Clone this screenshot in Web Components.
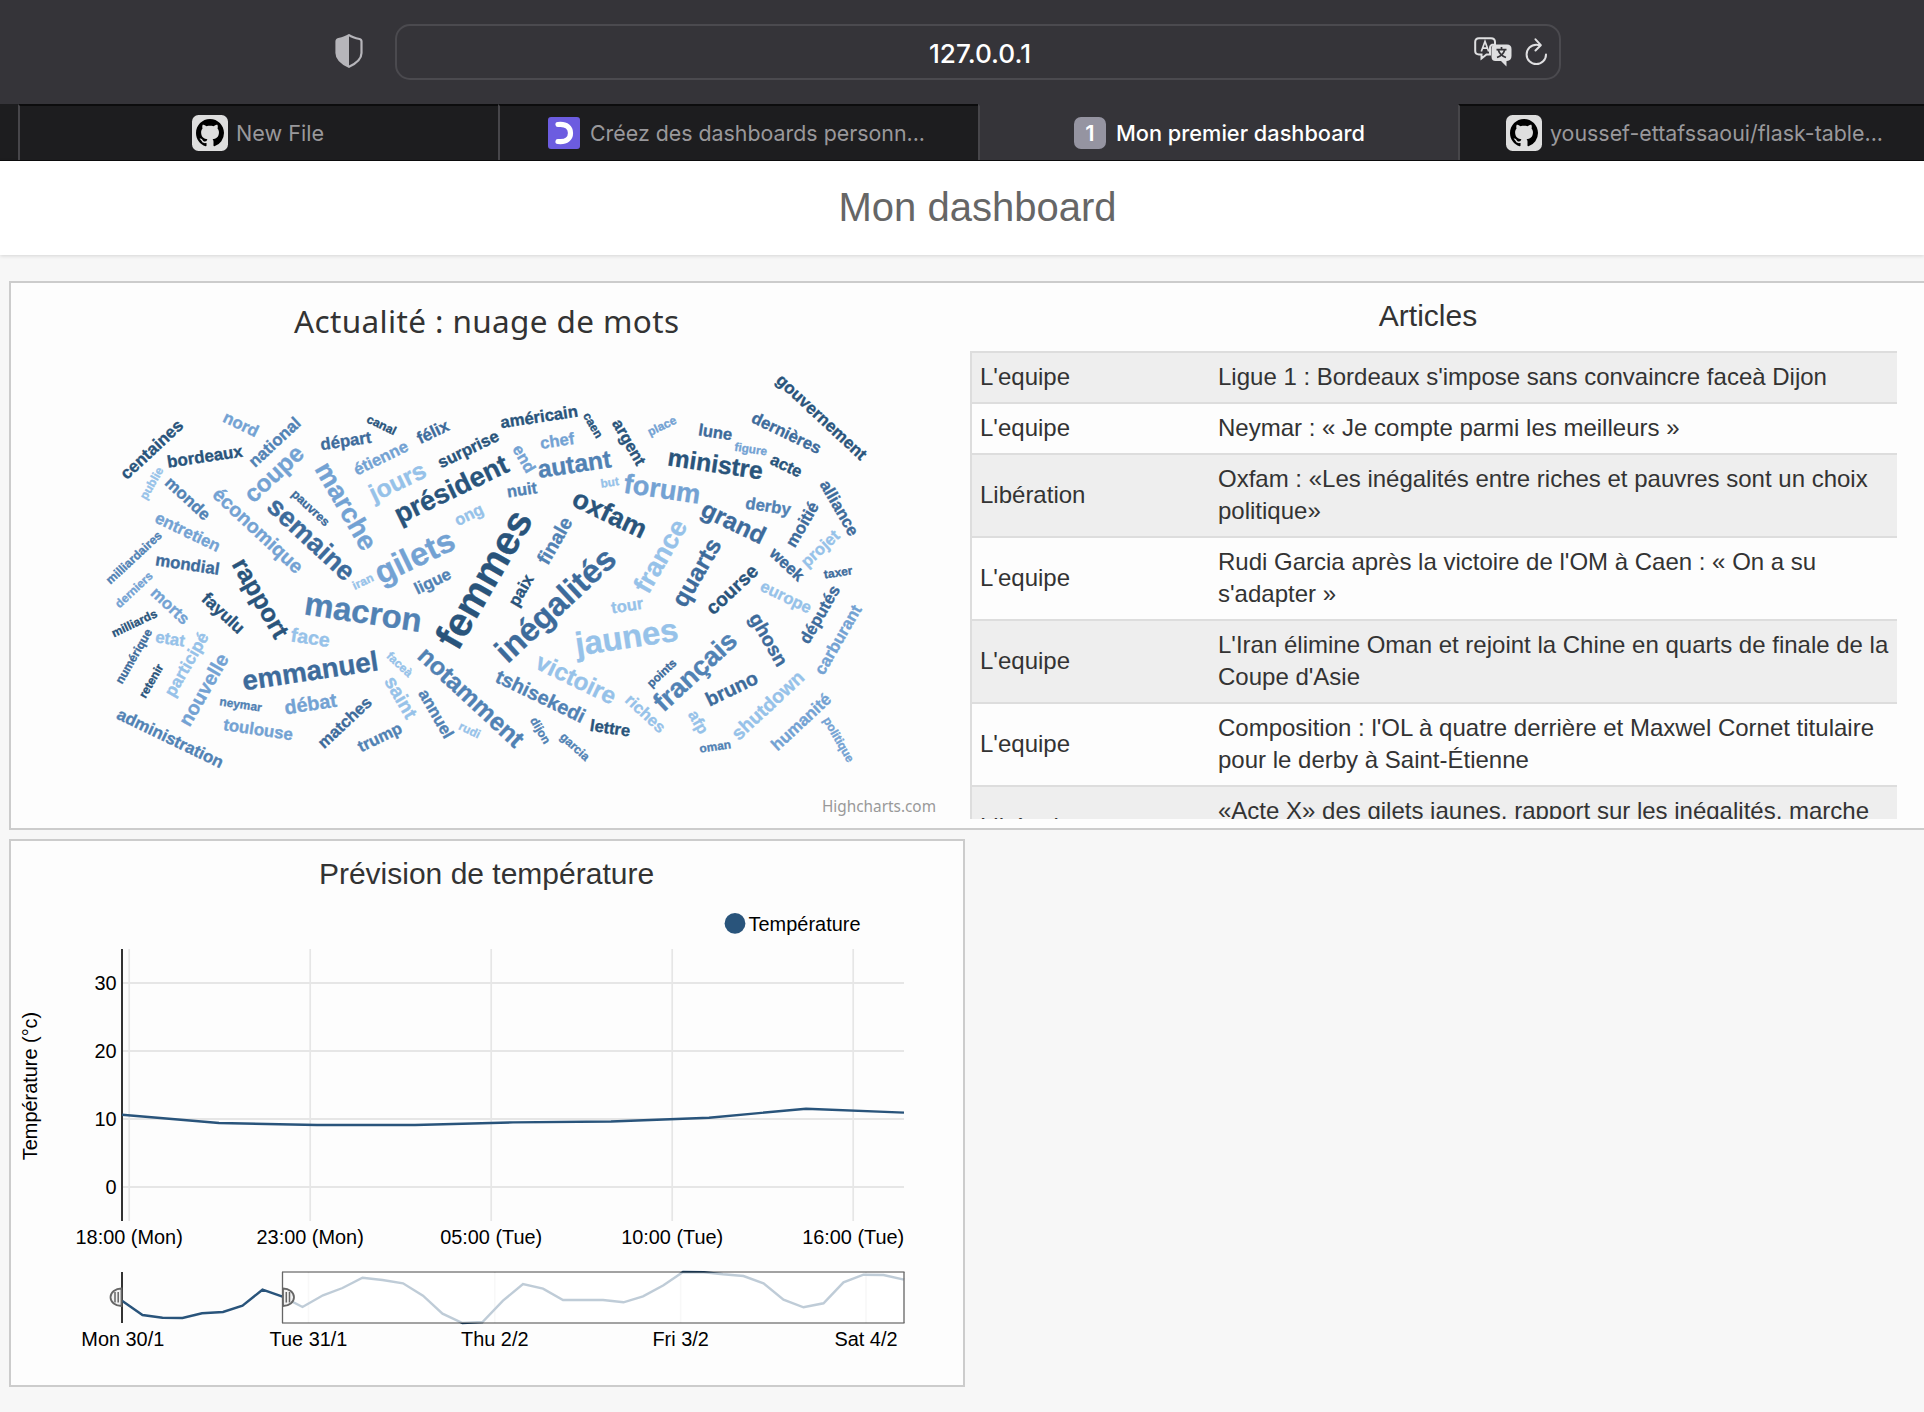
<!DOCTYPE html>
<html lang="fr">
<head>
<meta charset="utf-8">
<title>Mon premier dashboard</title>
<style>
html,body{margin:0;height:100%;overflow:hidden;background:#f7f7f7;font-family:"Liberation Sans",Arial,sans-serif;color:#333}
</style>
</head>
<body>
<browser-toolbar address="127.0.0.1"></browser-toolbar>
<tab-strip>
  <browser-tab icon="github" fit="88" shift="3">New File</browser-tab>
  <browser-tab icon="course" fit="335" shift="5">Créez des dashboards personn...</browser-tab>
  <browser-tab icon="badge" active fit="249" shift="0">Mon premier dashboard</browser-tab>
  <browser-tab icon="github" fit="333" shift="9">youssef-ettafssaoui/flask-table...</browser-tab>
</tab-strip>
<page-header>Mon dashboard</page-header>
<dashboard-grid>
  <dashboard-panel wide>
    <word-cloud></word-cloud>
    <article-list heading="Articles"></article-list>
  </dashboard-panel>
  <dashboard-panel>
    <temperature-chart></temperature-chart>
  </dashboard-panel>
</dashboard-grid>
<script>
class Base extends HTMLElement{
  connectedCallback(){
    if(this.shadowRoot) return;
    this.attachShadow({mode:'open'}).innerHTML=this.render();
  }
}

customElements.define('browser-toolbar',class extends Base{
  render(){return `<style>
:host{display:flex;box-sizing:border-box;height:104px;padding:24px 363px 24px 335px;background:#353439;align-items:center;gap:32px;font-family:Inter,sans-serif}
.shield{width:28px;height:34px;flex:none;margin-top:-2px}
.bar{flex:1;box-sizing:border-box;height:56px;border:2px solid #4b4a4f;border-radius:15px;display:flex;align-items:center;padding:0 11px 0 89px}
.addr{flex:1}
.addr svg{display:block;margin:auto;overflow:visible}
.tr{width:38px;height:30px;margin-right:13px}.re{width:23px;height:28px}
</style>
<svg class="shield" viewBox="0 0 28 34"><path d="M14 1.2 C10.5 3.6 6.500 4.400 3.500 5 Q1.500 5.500 1.500 7.500 V19 C1.500 25.500 7 29.500 14 32.800 C21 29.500 26.500 25.500 26.500 19 V7.500 Q26.500 5.500 24.500 5 C21.500 4.400 17.500 3.600 14 1.200Z" fill="none" stroke="#b6b5ba" stroke-width="2.200"/><path d="M14 1.500 C10.500 3.600 6.500 4.400 3.500 5 Q1.500 5.500 1.500 7.500 V19 C1.500 25.500 7 29.500 14 32.500Z" fill="#b6b5ba"/></svg>
<div class="bar"><div class="addr"><svg width="120" height="40"><text x="60" y="30.500" text-anchor="middle" textLength="102" lengthAdjust="spacingAndGlyphs" font-size="25.500" font-weight="500" fill="#fff">${this.getAttribute('address')}</text></svg></div>
<svg class="tr" viewBox="0 0 38 30"><path d="M5 1.200 H17 Q21 1.200 21 5 V7.500 H20 Q16 7.500 16 11 V17.500 H12.500 L7.500 21.500 V17.500 H5 Q1.200 17.500 1.200 14 V5 Q1.200 1.200 5 1.200Z" fill="none" stroke="#dfdfe1" stroke-width="2"/><path d="M7.300 14.500 L11 4.500 L14.700 14.500 M8.500 11.200 H13.500" fill="none" stroke="#dfdfe1" stroke-width="1.700"/><path d="M21.500 7.500 H33 Q37.500 7.500 37.500 12 V19 Q37.500 23.500 33 24 H32.500 V29.500 L27 24 H21.500 Q17.500 24 17.500 19.500 V12 Q17.500 7.500 21.500 7.500Z" fill="#dfdfe1"/><path d="M27.500 10 V12.500 M22.500 12.700 H32.500 M24.300 13 Q26 18.500 32 20.500 M30.700 13 Q29 18.500 23 20.500" fill="none" stroke="#353439" stroke-width="1.700"/></svg>
<svg class="re" viewBox="0 0 23 28"><path d="M15 7.200 Q13 6.700 11.300 6.700 A9.700 9.700 0 1 0 21 16.400" fill="none" stroke="#dfdfe1" stroke-width="2" stroke-linecap="round"/><path d="M10.500 1.300 L15.800 7.200 L10.500 12.500" fill="none" stroke="#dfdfe1" stroke-width="2" stroke-linecap="round" stroke-linejoin="round"/></svg></div>`}
});

customElements.define('tab-strip',class extends Base{
  render(){return `<style>:host{display:flex;box-sizing:border-box;height:57px;padding-left:18px;background:#1d1d1f;border-bottom:1px solid #0c0c0d;overflow:hidden}</style><slot></slot>`}
});

const TAB_ICONS={
  github:`<svg width="36" height="36" viewBox="0 0 36 36"><rect width="36" height="36" rx="6.500" fill="#dedede"/><path transform="translate(4 4) scale(1.75)" d="M8 0C3.580 0 0 3.580 0 8c0 3.540 2.290 6.530 5.470 7.590.4.070.55-.17.55-.38 0-.19-.01-.82-.01-1.490-2.010.37-2.530-.49-2.690-.94-.09-.23-.48-.94-.82-1.130-.28-.15-.68-.52-.01-.53.63-.01 1.080.58 1.230.82.72 1.210 1.870.87 2.330.66.07-.52.28-.87.51-1.070-1.780-.2-3.640-.89-3.640-3.950 0-.87.31-1.590.82-2.150-.08-.2-.36-1.020.08-2.120 0 0 .67-.21 2.200.82.640-.18 1.320-.27 2-.27.68 0 1.360.09 2 .27 1.530-1.040 2.200-.82 2.200-.82.44 1.100.16 1.920.08 2.120.51.56.82 1.270.82 2.150 0 3.070-1.870 3.750-3.650 3.950.29.25.54.73.54 1.480 0 1.070-.01 1.930-.01 2.200 0 .21.15.46.55.38A8.013 8.013 0 0016 8c0-4.420-3.580-8-8-8z"/></svg>`,
  course:`<svg width="32" height="32" viewBox="0 0 32 32"><rect width="32" height="32" rx="3" fill="#6c5ce0"/><path d="M10 7.500 C19 6.500 22.500 11 22.500 16 S19 25.500 10 24.500" fill="none" stroke="#fff" stroke-width="5.200" stroke-linecap="round"/></svg>`,
  badge:`<svg width="32" height="32" viewBox="0 0 32 32"><rect width="32" height="32" rx="7" fill="#9594a1"/><text x="16" y="23.500" text-anchor="middle" font-size="22" font-weight="600" fill="#fff">1</text></svg>`
};
customElements.define('browser-tab',class extends Base{
  render(){
    const w=+this.getAttribute('fit'),on=this.hasAttribute('active'),k=this.getAttribute('icon');
    return `<style>
:host{display:flex;flex:0 0 480px;box-sizing:border-box;height:56px;align-items:center;justify-content:center;gap:${k==='github'?8:10}px;padding-right:${this.getAttribute('shift')}px;border-left:2px solid #47464a;border-top:2px solid ${on?'#353439':'#0c0c0d'};background:${on?'#353439':'#1d1d1f'};font-family:Inter,sans-serif}
svg{display:block;flex:none;overflow:visible}
</style>${TAB_ICONS[k]}<svg width="${w}" height="36"><text x="0" y="26" textLength="${w}" lengthAdjust="spacingAndGlyphs" font-size="22" font-weight="${on?500:400}" fill="${on?'#fff':'#99989b'}">${this.textContent}</text></svg>`}
});

customElements.define('page-header',class extends Base{
  render(){return `<style>:host{display:flex;box-sizing:border-box;height:94px;padding:0 0 2px 31px;justify-content:center;align-items:center;background:#fff;color:#666;font:40px "Liberation Sans",Arial,sans-serif;box-shadow:0 1px 4px rgba(0,0,0,.14)}</style><slot></slot>`}
});

customElements.define('dashboard-grid',class extends Base{
  render(){return `<style>:host{display:flex;flex-direction:column;align-items:flex-start;gap:9px;padding:26px 0 0 9px}</style><slot></slot>`}
});

customElements.define('dashboard-panel',class extends Base{
  render(){const w=this.hasAttribute('wide');return `<style>:host{display:flex;box-sizing:border-box;width:${w?1930:956}px;height:${w?549:548}px;border:2px solid #ccc;background:#fdfdfd;overflow:hidden}</style><slot></slot>`}
});

/* Word, centre x, centre y of the lowercase band, rotation index, size, shade index */
const ANGLES=[-60,-42.86,-25.71,-8.57,8.57,25.71,42.86,60];
const SHADES=['#29547b','#3d6b9b','#5182b4','#73a2d3','#96c2e9'];
const WORDS=[
['femmes',486.5,580.5,0,39.8,0],['macron',363,614.5,4,32.2,2],['gilets',415.5,558.5,2,32,3],['jaunes',627,639.5,3,32.200,4],['inégalités',557,606.500,1,32.3,1],
['président',452,491,2,27,0],['semaine',310,540.3,6,26.8,1],['marche',344.500,507,7,26.800,3],['forum',662,491,4,26.800,3],['oxfam',609,515.5,5,26.4,0],['emmanuel',310.5,673,3,27.300,1],['français',696.3,672.7,1,26.5,2],['france',662,557,0,26.3,4],
['rapport',259,599,7,24.8,0],['notamment',469.800,698.3,6,24.6,2],['coupe',275,475,1,23.9,3],['jours',398.3,483.3,2,24.2,4],['autant',574.500,466,3,24.3,2],['ministre',715.2,465.8,4,24.3,0],['grand',732.8,524,5,24.2,1],['quarts',698,573.2,0,24,1],['victoire',575.5,680.7,5,23.8,4],
['économique',257,531.5,6,19.3,3],['nouvelle',205,690.5,0,19.4,3],['face',310.2,639,4,19.3,4],['débat',310.7,705.3,3,19.4,3],['saint',399.5,698,7,19.2,4],['tshisekedi',540,697.7,5,19.5,2],['finale',556,541.4,0,19.2,2],['course',733,590.5,1,19,0],['ghosn',767.4,640.3,7,19,1],['bruno',732.3,690,2,19.3,1],['shutdown',768.700,706.3,1,19.1,4],
['fayulu',222.4,614,6,17.2,0],['centaines',152.5,450.3,1,16.8,0],['monde',187,499.3,6,16.5,2],['bordeaux',205,457.7,3,16.7,0],['nord',240.5,425.4,5,16.500,3],['national',275.4,443,1,16.5,2],['départ',346,442,3,16.500,1],['entretien',187.3,533,5,16.400,3],['mondial',187.3,565.7,4,16.600,1],['morts',169.3,606.7,6,16.300,3],['etat',170,640,4,16.400,4],['participé',187.6,665,0,16.800,4],['toulouse',258,730.7,4,16.600,3],['administration',169.700,739.3,5,16.600,2],['matches',345.5,723.3,1,16.300,1],['trump',380.3,738.3,2,16.300,2],['annuel',435,714.3,7,16.400,2],['lettre',610,729.3,4,16.300,0],['ligue',433,582.3,2,16.400,2],['paix',522,591,0,16.600,0],['tour',627.3,606.7,3,16.300,4],
['félix',433.3,433,2,16.500,1],['étienne',381.3,459,2,16.400,3],['surprise',468.7,450.3,2,16.400,0],['américain',539.2,418,3,16.500,0],['chef',557.3,442,3,16.400,3],['end',523,459.3,7,16.200,3],['nuit',522,491,3,16.300,2],['ong',469.3,515.7,2,16.200,4],['argent',628,442.8,7,16.300,0],['lune',715.2,433.500,4,16.300,1],['dernières',786,434,5,16.400,1],['gouvernement',820.8,418,6,16.700,0],['acte',785.7,466.7,5,16.300,0],['derby',768,507.4,4,16.500,2],['moitié',803.3,525,0,16.500,1],['alliance',838.3,508.5,7,16.400,1],['projet',821,549.3,1,16.300,4],['week',786.2,565.3,6,16.200,1],['europe',785.5,598,5,16.200,4],['députés',820.7,615,0,16.500,1],['carburant',839,640.3,0,16.500,3],['riches',644.7,714.4,6,16.100,4],['afp',697.3,722.7,7,16,4],['humanité',802,722.7,1,16.600,3],
['publie',152.3,483.7,0,11.800,4],['pauvres',310,508.5,6,12,1],['milliardaires',134.500,558.3,1,11.900,2],['iran',363.3,582.3,2,11.700,4],['derniers',134.5,590.3,1,11.600,3],['milliards',134.700,624,2,11.700,0],['numérique',134.5,656.7,0,11.800,1],['retenir',151.9,681.4,0,11.700,0],['neymar',240.5,705.3,4,11.800,2],['faceà',399,665,6,11.700,4],['rudi',469.3,731,5,11.700,4],['dijon',539.7,731,7,11.700,2],['garcia',574.3,747.3,6,11.800,2],['canal',381.3,425.7,5,12,0],['caen',592.3,425.7,7,11.800,0],['but',609.8,483.3,3,11.500,4],['place',662.3,426.7,2,11.700,3],['figure',750.7,450,4,11.600,3],['taxer',838.3,573.3,3,11.800,1],['points',662.3,673.7,1,11.600,1],['oman',715.3,747.3,3,11.700,2],['politique',838,740,7,11.800,3]];
customElements.define('word-cloud',class extends Base{
  render(){return `<style>:host{display:block;flex:none;width:954px;height:545px}svg{display:block}.w{font:bold 16px "Liberation Sans",Arial,sans-serif;stroke-width:.35px}.t{font-family:"Noto Sans","DejaVu Sans",sans-serif}</style>
<svg width="954" height="545" viewBox="11 283 954 545">
<text class="t" x="294" y="333" font-size="31.500" textLength="385" fill="#333">Actualité : nuage de mots</text>
${WORDS.map(([t,x,y,a,s,c])=>`<text class="w" text-anchor="middle" y="${(s*.27).toFixed(2)}" transform="translate(${x} ${y}) rotate(${ANGLES[a]})" style="font-size:${(s*1.015).toFixed(2)}px" fill="${SHADES[c]}" stroke="${SHADES[c]}">${t}</text>`).join('')}
<text class="t" x="822" y="811.500" font-size="15.500" textLength="114" lengthAdjust="spacingAndGlyphs" fill="#999">Highcharts.com</text>
</svg>`}
});

const ARTICLES=[
["L'equipe","Ligue 1 : Bordeaux s'impose sans convaincre faceà Dijon"],
["L'equipe","Neymar : « Je compte parmi les meilleurs »"],
["Libération","Oxfam : «Les inégalités entre riches et pauvres sont un choix politique»"],
["L'equipe","Rudi Garcia après la victoire de l'OM à Caen : « On a su s'adapter »"],
["L'equipe","L'Iran élimine Oman et rejoint la Chine en quarts de finale de la Coupe d'Asie"],
["L'equipe","Composition : l'OL à quatre derrière et Maxwel Cornet titulaire pour le derby à Saint-Étienne"],
["Libération","«Acte X» des gilets jaunes, rapport sur les inégalités, marche"]];
customElements.define('article-list',class extends Base{
  render(){return `<style>
:host{display:flex;flex-direction:column;flex:none;width:927px;margin-left:5px;font:24px/32px "Liberation Sans",Arial,sans-serif;color:#333}
h2{margin:0;height:68px;box-sizing:border-box;padding-top:17px;padding-right:11px;font-weight:400;font-size:30px;line-height:32px;text-align:center}
.list{height:468px;overflow:hidden;border-left:2px solid #ddd;box-sizing:border-box}
.row{display:flex;align-items:center;box-sizing:border-box;border-top:2px solid #ddd;padding:8px 0 9px 8px}
.row:nth-child(odd){background:#eee}
.row:last-child{height:83px}
.src{flex:0 0 238px}.ttl{flex:1;padding-right:6px}
.row:last-child .ttl{align-self:flex-start}
</style><h2>${this.getAttribute('heading')}</h2><div class="list">${ARTICLES.map(([s,t])=>`<div class="row"><div class="src">${s}</div><div class="ttl">${t}</div></div>`).join('')}</div>`}
});

const NAV='122,1300.7 142.5,1315 162.5,1317.7 182.5,1318 202,1313.3 223,1312 242.5,1305.7 262.5,1289.7 282.5,1296.7 302.5,1307 323,1295.3 342.5,1288 362.5,1277.7 382.5,1280 403,1283.3 423,1295.7 442.5,1313.7 462.5,1323 482.5,1322 503,1300.7 523,1284 543,1288.7 563,1300 583,1300 603,1300 623.5,1302.3 643,1296.3 663.5,1285.3 683,1272 704,1272.3 723,1274.3 743.5,1276 763.5,1283.3 783.5,1299.7 803.5,1307.3 823.5,1303.3 843.5,1282.3 863.5,1274.7 883.5,1275 904,1279.7';
customElements.define('temperature-chart',class extends Base{
  render(){
    const xs=[129.2,310.2,491.2,672.2,853.2],nx=[122.8,308.5,494.8,680.6,866];
    const hours=['18:00 (Mon)','23:00 (Mon)','05:00 (Tue)','10:00 (Tue)','16:00 (Tue)'],days=['Mon 30/1','Tue 31/1','Thu 2/2','Fri 3/2','Sat 4/2'];
    const grip=(x,d)=>`<path d="M${x} 1288.500 A11 8.750 0 0 ${d>0?1:0} ${x} 1306 Z" fill="#f2f2f2" stroke="#666" stroke-width="1.800"/><path d="M${x+3.3*d} 1292 V1302.500 M${x+6.5*d} 1292 V1302.500" stroke="#666" stroke-width="1.500"/>`;
    return `<style>:host{display:block;width:952px;height:544px}svg{display:block}text{font-family:"Liberation Sans",Arial,sans-serif;font-size:19.900px;fill:#000}.h{font-size:30px;fill:#333}</style>
<svg width="952" height="544" viewBox="11 841 952 544">
<text class="h" x="486.500" y="884" text-anchor="middle">Prévision de température</text>
<circle cx="735" cy="923.400" r="10.400" fill="#29547b"/><text x="748.500" y="931" textLength="112">Température</text>
<g stroke="#e6e6e6" stroke-width="2">${[983,1051,1119,1187].map(y=>`<path d="M122 ${y}H904"/>`).join('')}</g>
<g stroke="#e6e6e6" stroke-width="1.700">${xs.map(x=>`<path d="M${x} 949V1221"/>`).join('')}</g>
<path d="M122 949V1221" stroke="#333" stroke-width="2"/>
<polyline points="122,1114.700 219,1123 317,1125 415,1125 513,1122.400 611,1121.500 709,1117.700 806,1108.700 904,1112.600" fill="none" stroke="#29547b" stroke-width="2.400"/>
${['30','20','10','0'].map((t,i)=>`<text x="116.500" y="${990+68*i}" text-anchor="end">${t}</text>`).join('')}
<text transform="translate(37 1086) rotate(-90)" text-anchor="middle">Température (°c)</text>
${hours.map((t,i)=>`<text x="${xs[i]}" y="1244" text-anchor="middle">${t}</text>`).join('')}
<g stroke="#e6e6e6" stroke-width="1.500">${nx.slice(1).map(x=>`<path d="M${x} 1272V1323"/>`).join('')}</g>
<path d="M122 1272V1323" stroke="#333" stroke-width="2"/>
<polyline points="${NAV}" fill="none" stroke="#29547b" stroke-width="2.400"/>
<rect x="282.500" y="1272.500" width="621.500" height="50.500" fill="#fff" fill-opacity=".7"/>
<path d="M282 1272H904.500M282 1323H904.500" stroke="#000" stroke-opacity=".36" stroke-width="2"/><path d="M282.500 1272V1323M904 1272V1323" stroke="#666" stroke-width="1.300"/>
${grip(121.5,-1)}${grip(283,1)}
${days.map((t,i)=>`<text x="${nx[i]}" y="1346" text-anchor="middle">${t}</text>`).join('')}
</svg>`}
});
</script>
</body>
</html>
